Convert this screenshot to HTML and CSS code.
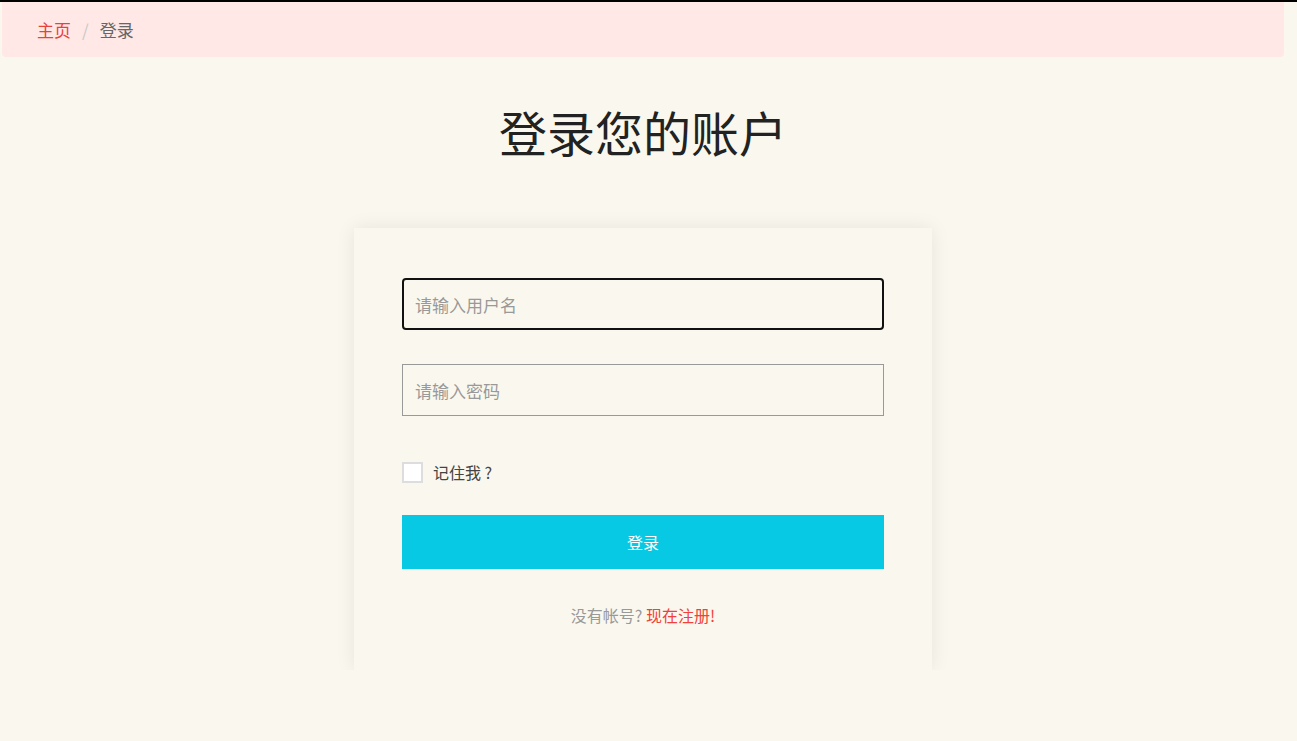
FILE: index.html
```html
<!DOCTYPE html>
<html lang="zh-CN">
<head>
    <meta charset="UTF-8">
    <title>登录</title>
    <link rel="stylesheet" href="styles.css">
</head>
<body>
<div class="topline"></div>
<div class="page">
    <div class="crumb">
        <a href="javascript:;" class="crumb-home">主页</a>
        <span class="crumb-sep">/</span>
        <span class="crumb-cur">登录</span>
    </div>
    <h1 class="title">登录您的账户</h1>
    <div class="card">
        <form class="login">
            <input type="text" class="field is-focus" placeholder="请输入用户名"/>
            <input type="password" class="field" placeholder="请输入密码"/>
            <label class="remember">
                <span class="box"></span>
                <span>记住我 ?</span>
            </label>
            <button type="button" class="btn">登录</button>
            <p class="reg">没有帐号? <a href="javascript:;">现在注册!</a></p>
        </form>
    </div>
</div>
</body>
</html>
```
FILE: styles.css
```css
body{
    margin: 0;
    background-color: #faf8ee;
    font-family: "Noto Sans CJK SC", "Liberation Sans", sans-serif;
    color: #333;
}
.topline{
    height: 2px;
    background-color: #000;
}
.page{
    margin: 0 13px 0 2px;
}
.crumb{
    height: 55px;
    background-color: #ffe8e6;
    border-radius: 0 0 4px 4px;
    padding-left: 35px;
    display: flex;
    align-items: center;
    font-size: 17px;
}
.crumb a{
    text-decoration: none;
}
.crumb-home{
    color: #e8423c;
}
.crumb-sep{
    color: #c8c8c8;
    margin: 0 11px;
}
.crumb-cur{
    color: #666;
}
.title{
    margin: 42px 0 0;
    height: 64px;
    line-height: 64px;
    text-align: center;
    font-size: 48px;
    font-weight: normal;
    color: #222;
}
.card{
    width: 578px;
    margin: 65px auto 0;
    box-sizing: border-box;
    padding: 50px 48px 45px;
    background-color: #faf8ee;
    box-shadow: 0 0 18px rgba(0,0,0,0.08);
}
.login{
    display: flex;
    flex-direction: column;
}
.field{
    height: 52px;
    box-sizing: border-box;
    border: 1px solid #999;
    background-color: transparent;
    padding: 0 12px;
    font-size: 17px;
    font-family: inherit;
    color: #333;
    margin-bottom: 34px;
    outline: none;
}
.field::placeholder{
    color: #999;
}
.is-focus{
    border: 2px solid #111;
    border-radius: 4px;
    padding: 0 11px;
}
.remember{
    display: flex;
    align-items: center;
    margin-top: 12px;
    height: 21px;
    line-height: 21px;
    font-size: 16px;
    color: #444;
}
.box{
    width: 17px;
    height: 17px;
    border: 2px solid #ddd;
    background-color: #fff;
    margin-right: 10px;
}
.btn{
    margin-top: 32px;
    height: 54px;
    border: none;
    background-color: #08c9e3;
    color: #fff;
    font-size: 16px;
    font-family: inherit;
}
.reg{
    margin: 36px 0 0;
    text-align: center;
    font-size: 16px;
    line-height: 20px;
    color: #999;
}
.reg a{
    color: #f2413a;
    text-decoration: none;
}
```
